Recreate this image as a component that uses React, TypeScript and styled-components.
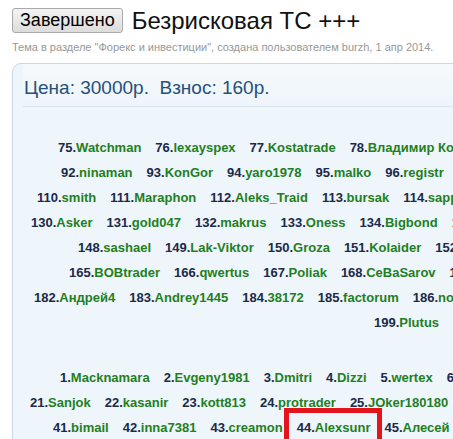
import React from "react";
import styled, { createGlobalStyle } from "styled-components";

const GlobalStyle = createGlobalStyle`
    html, body {
        margin: 0;
        padding: 0;
        overflow: hidden;
        background: #ffffff;
    }
    body {
        font-family: "Liberation Sans", Arial, sans-serif;
    }
`;

const Page = styled.div`
    padding: 8px 0 0 12px;
`;

const TitleRow = styled.div`
    display: flex;
    align-items: center;
    gap: 9px;
`;

const StatusButton = styled.button`
    height: 25px;
    padding: 0 7px;
    font-family: "Liberation Sans", Arial, sans-serif;
    font-size: 18px;
    line-height: 23px;
    color: #000;
    background: linear-gradient(#f4f4f4, #dcdcdc);
    border: 1px solid #a9a9a9;
    border-radius: 3px;
`;

const Title = styled.h1`
    margin: 0;
    font-size: 24px;
    line-height: 25px;
    font-weight: normal;
    color: #111;
    white-space: nowrap;
`;

const Subtitle = styled.div`
    margin-top: 7px;
    font-size: 11px;
    line-height: 14px;
    color: #989898;
    white-space: nowrap;
`;

const Panel = styled.div`
    margin-top: 9px;
    width: 900px;
    border: 1px solid #cbd8e4;
    border-radius: 9px;
    background: #eef5fb;
    padding-bottom: 40px;
`;

const PanelHead = styled.div`
    margin: 0 0 0 10px;
    padding: 12px 0 6px 1px;
    border-bottom: 1px solid #d9e4ee;
    font-size: 19px;
    line-height: 24px;
    color: #25507a;
    background: linear-gradient(#f6f9fc, #eef5fb);
    white-space: pre;
`;

const Block = styled.div<{ $gap: number }>`
    margin-top: ${p => p.$gap}px;
`;

const Row = styled.div<{ $indent: number }>`
    padding-left: ${p => p.$indent}px;
    height: 25px;
    line-height: 25px;
    font-size: 13px;
    font-weight: bold;
    white-space: nowrap;
`;

const Member = styled.span<{ $marked?: boolean }>`
    position: relative;
    display: inline-block;
    margin-right: 14px;
    &::after {
        content: "";
        display: ${p => (p.$marked ? "block" : "none")};
        position: absolute;
        left: -13px;
        right: -12px;
        top: -7px;
        bottom: -16px;
        border: 5px solid #e3141c;
    }
`;

const Num = styled.span`
    color: #1a2a48;
`;

const Nick = styled.span`
    color: #1f7f22;
`;

type Item = [string, string];

const firstBlock: { indent: number; items: Item[] }[] = [
    { indent: 45, items: [["75", "Watchman"], ["76", "lexayspex"], ["77", "Kostatrade"], ["78", "Владимир Коч"]] },
    { indent: 48, items: [["92", "ninaman"], ["93", "KonGor"], ["94", "yaro1978"], ["95", "malko"], ["96", "registr"], ["97", ""]] },
    { indent: 24, items: [["110", "smith"], ["111", "Maraphon"], ["112", "Aleks_Traid"], ["113", "bursak"], ["114", "sapphire"]] },
    { indent: 18, items: [["130", "Asker"], ["131", "gold047"], ["132", "makrus"], ["133", "Oness"], ["134", "Bigbond"], ["135", ""]] },
    { indent: 65, items: [["148", "sashael"], ["149", "Lak-Viktor"], ["150", "Groza"], ["151", "Kolaider"], ["152", ""]] },
    { indent: 56, items: [["165", "BOBtrader"], ["166", "qwertus"], ["167", "Poliak"], ["168", "CeBaSarov"], ["169", ""]] },
    { indent: 21, items: [["182", "Андрей4"], ["183", "Andrey1445"], ["184", "38172"], ["185", "factorum"], ["186", "none"]] },
    { indent: 361, items: [["199", "Plutus"], ["200", ""]] },
];

const secondBlock: { indent: number; items: Item[] }[] = [
    { indent: 47, items: [["1", "Macknamara"], ["2", "Evgeny1981"], ["3", "Dmitri"], ["4", "Dizzi"], ["5", "wertex"], ["6", ""]] },
    { indent: 17, items: [["21", "Sanjok"], ["22", "kasanir"], ["23", "kott813"], ["24", "protrader"], ["25", "JOker180180"], ["26", ""]] },
    { indent: 40, items: [["41", "bimail"], ["42", "inna7381"], ["43", "creamon"], ["44", "Alexsunr"], ["45", "Алесей"]] },
];

const renderRows = (rows: { indent: number; items: Item[] }[]) =>
    rows.map(row => (
        <Row key={row.items[0][0]} $indent={row.indent}>
            {row.items.map(([num, nick]) => (
                <Member key={num} $marked={nick === "Alexsunr"}>
                    <Num>{num}.</Num>
                    <Nick>{nick}</Nick>
                </Member>
            ))}
        </Row>
    ));

const App = () => {
    return (
        <Page>
            <GlobalStyle />
            <TitleRow>
                <StatusButton>Завершено</StatusButton>
                <Title>Безрисковая ТС +++</Title>
            </TitleRow>
            <Subtitle>
                Тема в разделе "Форекс и инвестиции", создана пользователем burzh, 1 апр 2014.
            </Subtitle>
            <Panel>
                <PanelHead>{"Цена: 30000р.  Взнос: 160р."}</PanelHead>
                <Block $gap={28}>{renderRows(firstBlock)}</Block>
                <Block $gap={30}>{renderRows(secondBlock)}</Block>
            </Panel>
        </Page>
    );
};

export default App;
